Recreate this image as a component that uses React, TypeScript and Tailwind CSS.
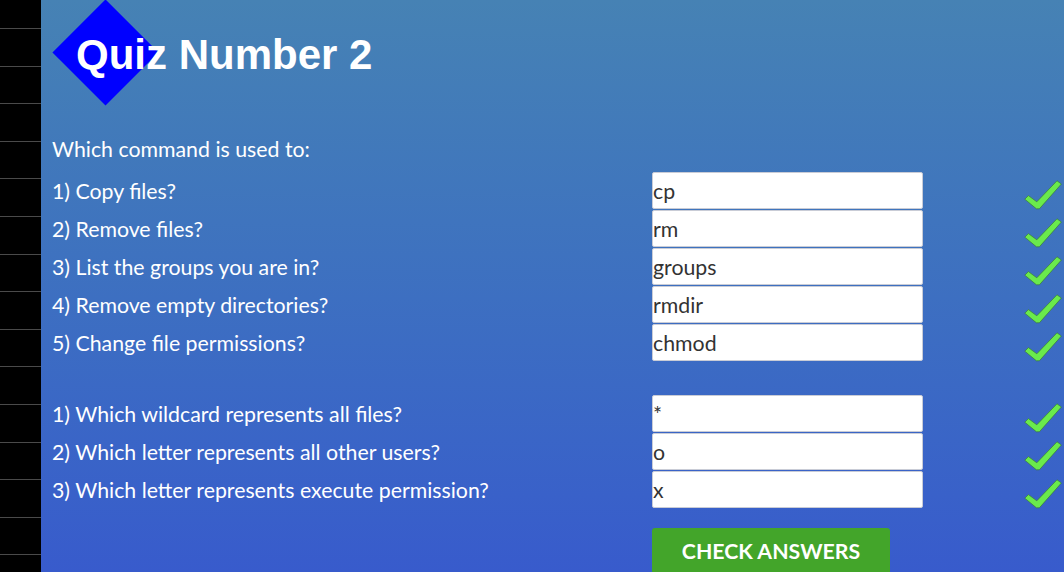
import React from 'react';

const Check: React.FC = () => (
  <svg width="38" height="30" viewBox="0 0 38 30" className="mt-[9px] ml-[101px]">
    <path
      d="M0.8 19.2 L4.4 15.6 L12.8 21.8 L33 0.8 L37.4 4 L15.4 28.8 L12.4 28.8 Z"
      fill="#6aea4c"
      stroke="#3a7a3a"
      strokeWidth="0.7"
      strokeLinejoin="round"
    />
  </svg>
);

const QuizRow: React.FC<{ label: string; answer: string }> = ({ label, answer }) => (
  <div className="grid grid-cols-[600px_271px_1fr] h-[38px]">
    <div className="flex items-center pt-[2px] text-white text-[21.3px]">{label}</div>
    <div className="pt-[1px]">
      <input
        readOnly
        value={answer}
        className="w-[271px] h-[37px] bg-white border border-[#c9ccd6] rounded-[2px] px-0 text-[21.3px] text-[#333] outline-none font-['Lato',sans-serif]"
      />
    </div>
    <div>
      <Check />
    </div>
  </div>
);

const App: React.FC = () => {
  const commands = [
    { label: '1) Copy files?', answer: 'cp' },
    { label: '2) Remove files?', answer: 'rm' },
    { label: '3) List the groups you are in?', answer: 'groups' },
    { label: '4) Remove empty directories?', answer: 'rmdir' },
    { label: '5) Change file permissions?', answer: 'chmod' }
  ];

  const symbols = [
    { label: '1) Which wildcard represents all files?', answer: '*' },
    { label: '2) Which letter represents all other users?', answer: 'o' },
    { label: '3) Which letter represents execute permission?', answer: 'x' }
  ];

  return (
    <div className="flex h-[572px] overflow-hidden font-['Lato',sans-serif]">
      <aside className="w-[41px] shrink-0 bg-black flex flex-col">
        <div className="h-[29px] shrink-0 border-b border-[#4a4a4a]" />
        {Array.from({ length: 15 }).map((_, i) => (
          <div key={i} className="h-[37.6px] shrink-0 border-b border-[#4a4a4a]" />
        ))}
      </aside>

      <main className="flex-1 bg-gradient-to-b from-[#4682b4] to-[#385bcc] pl-[11px]">
        <header className="relative h-[128px]">
          <div className="absolute left-[16px] top-[15px] w-[75px] h-[75px] rotate-45 bg-[#0000ff]" />
          <h1 className="absolute left-[24px] top-[34px] text-[42px] leading-none font-bold text-white font-['Liberation_Sans',Arial,sans-serif]">
            Quiz Number 2
          </h1>
        </header>

        <div className="h-[43px] flex items-center text-white text-[21.3px]">Which command is used to:</div>
        {commands.map((q) => (
          <QuizRow key={q.label} label={q.label} answer={q.answer} />
        ))}

        <div className="h-[33px]" />
        {symbols.map((q) => (
          <QuizRow key={q.label} label={q.label} answer={q.answer} />
        ))}

        <div className="pt-[20px] pl-[600px]">
          <button className="w-[238px] h-[48px] bg-[#43a52a] rounded-[3px] text-white text-[21.3px] font-bold">
            CHECK ANSWERS
          </button>
        </div>
      </main>
    </div>
  );
};

export default App;
